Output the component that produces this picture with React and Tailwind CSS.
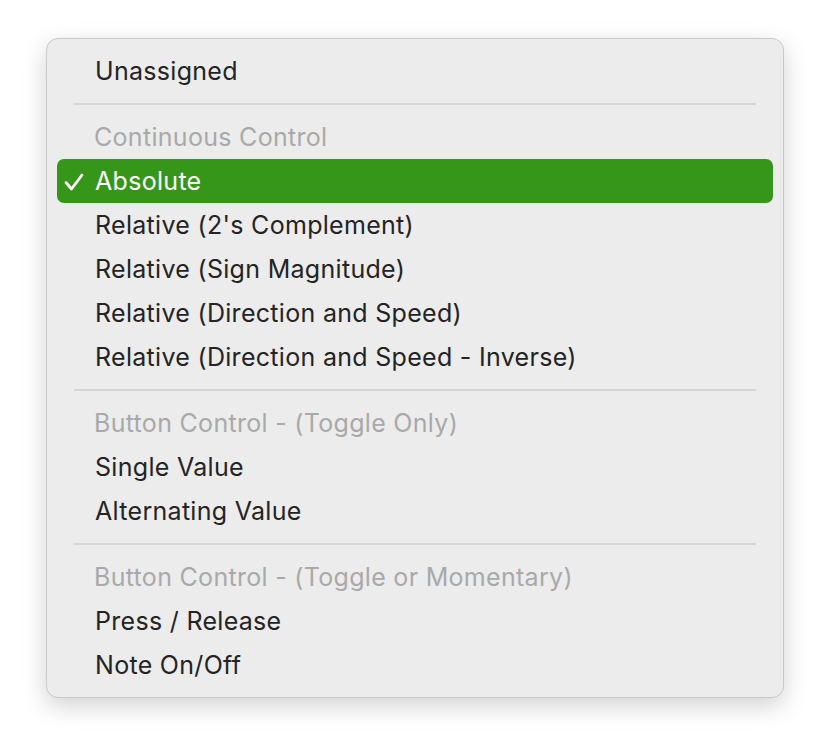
import React from "react";

const sections = [
  { items: ["Unassigned"] },
  {
    header: "Continuous Control",
    items: [
      "Absolute",
      "Relative (2's Complement)",
      "Relative (Sign Magnitude)",
      "Relative (Direction and Speed)",
      "Relative (Direction and Speed - Inverse)",
    ],
  },
  { header: "Button Control - (Toggle Only)", items: ["Single Value", "Alternating Value"] },
  {
    header: "Button Control - (Toggle or Momentary)",
    items: ["Press / Release", "Note On/Off"],
  },
];

const selected = "Absolute";

const Check = () => (
  <svg width="20" height="18" viewBox="0 0 20 18" className="shrink-0">
    <path d="M2 9.5 L7.5 16 L18 2" fill="none" stroke="white" strokeWidth="2.8" strokeLinecap="round" strokeLinejoin="round" />
  </svg>
);

const Item = ({ label }) => {
  const active = label === selected;
  return (
    <div
      className={
        "h-[44px] mx-[10px] rounded-[7px] flex items-center pt-[2px] " +
        (active ? "bg-[#36961a] text-white" : "text-[#242424]")
      }
    >
      <div className="w-[38px] flex justify-end pr-[11px]">{active && <Check />}</div>
      <span>{label}</span>
    </div>
  );
};

const App = () => {
  return (
    <div className="w-[830px] h-[750px] bg-white pt-[38px] pl-[46px]" style={{ fontFamily: "Inter, 'Noto Sans', sans-serif" }}>
      <div className="w-[738px] rounded-[12px] bg-[#ececec] border border-[#c9c9c9] shadow-[0_8px_24px_rgba(0,0,0,0.18)] py-[10px] text-[25px] tracking-[0.3px]">
        {sections.map((s, i) => (
          <div key={i}>
            {i > 0 && (
              <div className="h-[22px] flex items-center px-[27px]">
                <div className="h-[2px] w-full bg-[#d6d6d6]" />
              </div>
            )}
            {s.header && (
              <div className="h-[44px] flex items-center pt-[2px] pl-[47px] text-[#a9a9a9]">{s.header}</div>
            )}
            {s.items.map((it) => (
              <Item key={it} label={it} />
            ))}
          </div>
        ))}
      </div>
    </div>
  );
};

export default App;
